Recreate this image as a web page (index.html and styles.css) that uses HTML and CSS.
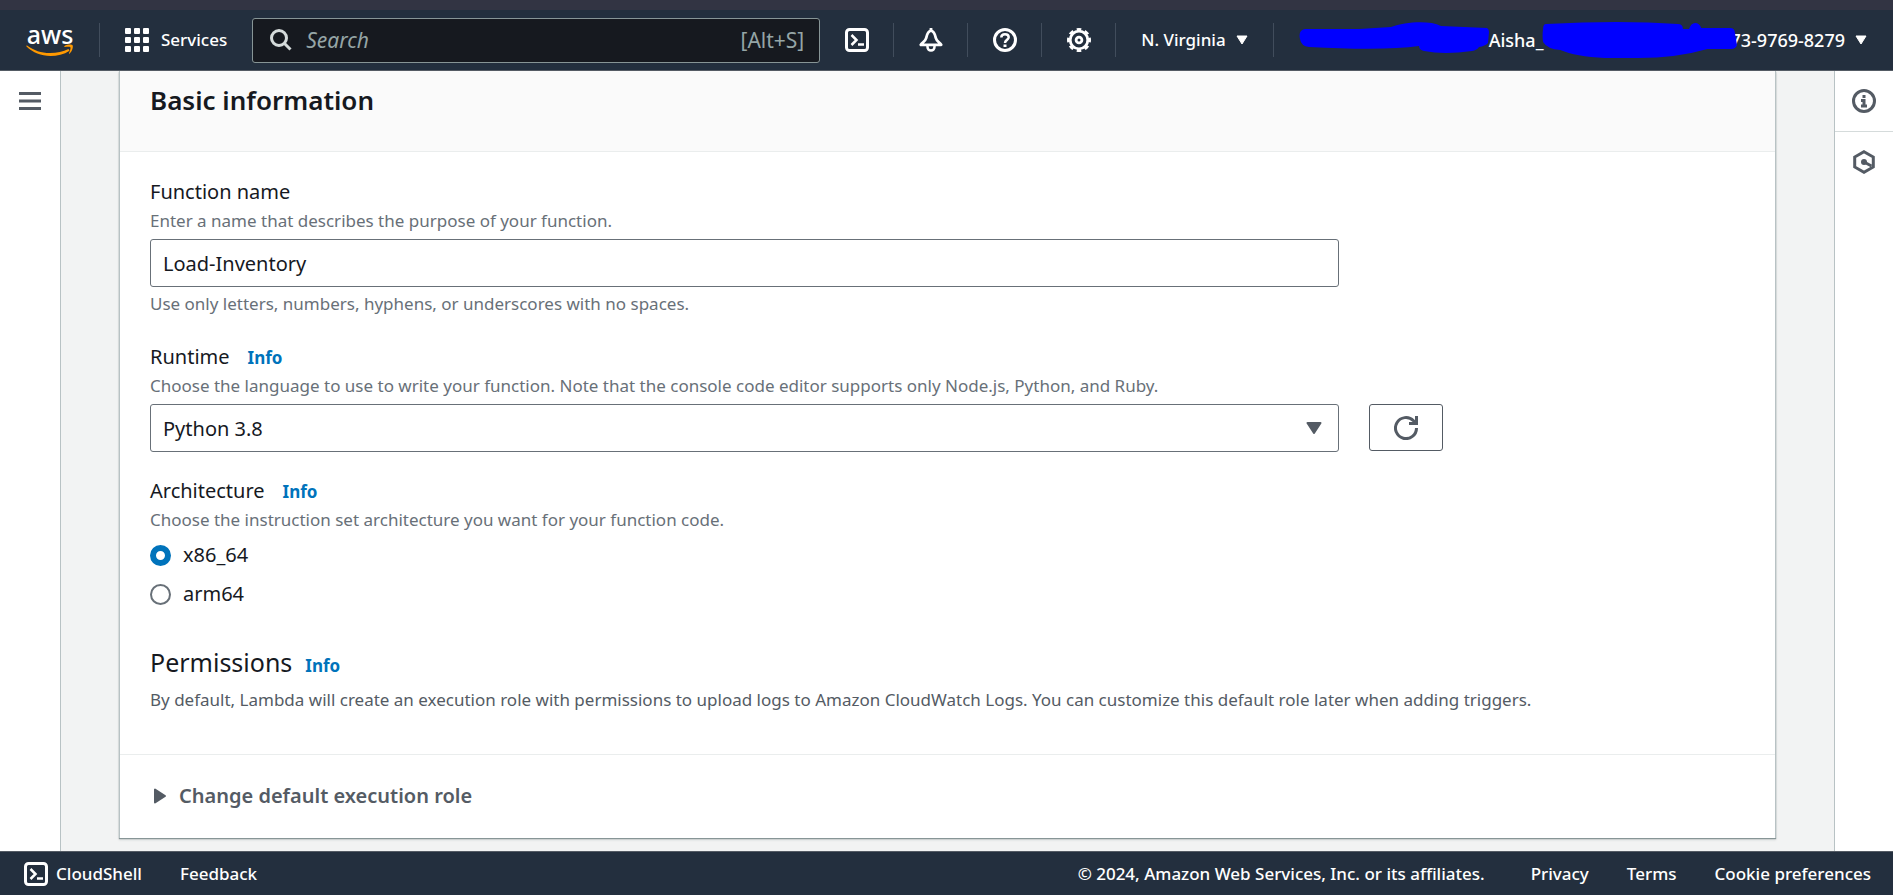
FILE: index.html
```html
<!DOCTYPE html>
<html lang="en">
<head>
<meta charset="utf-8">
<title>Create function - Lambda</title>
<link rel="stylesheet" href="styles.css">
</head>
<body>
<div class="strip"></div>
<header class="nav">
  <a class="logo" href="#" aria-label="AWS home">
    <span class="logo-word">aws</span>
    <svg class="smile" width="48" height="13" viewBox="0 0 48 13"><path d="M1 1.5C8 6.500 15 9 24 9c7 0 13-1.500 18.500-4l1 1.800C38 10.500 31 12 24.500 12 15 12 7 8.500.5 2.500.2 1.800.5 1.200 1 1.500z" fill="#f90"/><path d="M38.500 2c2.500-1.600 7-1.800 8-.8 1 1.200-.2 6-2.800 8.300-.6.500-1 .2-.7-.4.700-1.700 2-5 1.400-5.900-.7-.8-3.800-.5-5.500-.3-.7.100-.9-.5-.4-.9z" fill="#f90"/></svg>
  </a>
  <span class="rule"></span>
  <button class="services">
    <svg width="24" height="24" viewBox="0 0 24 24" fill="#fff"><rect width="6" height="6" rx="1"/><rect x="9" width="6" height="6" rx="1"/><rect x="18" width="6" height="6" rx="1"/><rect y="9" width="6" height="6" rx="1"/><rect x="9" y="9" width="6" height="6" rx="1"/><rect x="18" y="9" width="6" height="6" rx="1"/><rect y="18" width="6" height="6" rx="1"/><rect x="9" y="18" width="6" height="6" rx="1"/><rect x="18" y="18" width="6" height="6" rx="1"/></svg>
    Services
  </button>
  <label class="search">
    <svg width="22" height="22" viewBox="0 0 22 22" fill="none" stroke="#d5dbdb" stroke-width="3"><circle cx="9" cy="9" r="7.500"/><path d="M14.500 14.500 20.500 20.500"/></svg>
    <input type="text" placeholder="Search" aria-label="Search">
    <span class="hint">[Alt+S]</span>
  </label>
  <button class="tool" aria-label="CloudShell"><svg width="24" height="24" viewBox="0 0 24 24" fill="none" stroke="#fff" stroke-width="3"><rect x="1.500" y="1.500" width="21" height="21" rx="3"/><path d="M6.500 7l5 5-5 5" stroke-width="2.500"/><path d="M13 16.500h6" stroke-width="2.500"/></svg></button>
  <span class="rule"></span>
  <button class="tool" aria-label="Notifications"><svg width="24" height="24" viewBox="0 0 24 24" fill="none" stroke="#fff" stroke-width="2.800" stroke-linejoin="round"><path d="M12 2.500C8.500 3.500 8 6.500 7.200 10 6.500 13 3.500 14.500 1.800 16.800h20.400C20.500 14.500 17.500 13 16.800 10 16 6.500 15.500 3.500 12 2.500z"/><path d="M12 0v3"/><path d="M8.500 18v1c0 2 1.500 3.500 3.500 3.500s3.500-1.500 3.500-3.500v-1" stroke-width="2.500"/></svg></button>
  <span class="rule"></span>
  <button class="tool" aria-label="Help"><svg width="24" height="24" viewBox="0 0 24 24" fill="none" stroke="#fff" stroke-width="3"><circle cx="12" cy="12" r="10.500"/><path d="M8.300 9.500C8.300 7.300 9.800 6.200 12 6.200s3.700 1.200 3.700 3.100c0 2.700-3.700 2.500-3.700 5.700" stroke-width="2.500"/><path d="M12 16.500v2.500"/></svg></button>
  <span class="rule"></span>
  <button class="tool" aria-label="Settings"><svg width="24" height="24" viewBox="0 0 24 24" fill="none" stroke="#fff" stroke-width="2.800"><circle cx="12" cy="12" r="8.800"/><circle cx="12" cy="12" r="10.600" pathLength="16" stroke-dasharray="1.100 .9" stroke-dashoffset=".55"/><circle cx="12" cy="12" r="2.900"/></svg></button>
  <span class="rule"></span>
  <button class="menu">N. Virginia <svg width="12" height="10" viewBox="0 0 12 10"><path d="M1 1h10L6 9z" fill="#fff" stroke="#fff" stroke-linejoin="round"/></svg></button>
  <span class="rule"></span>
  <button class="menu account" aria-label="Account">
    <svg class="blot" width="190" height="36" viewBox="0 0 190 36"><path d="M6 7 60 7 92 5C106 0 130-2 142 4l46 2q2 1 2 4l-1 11q-3 3-9 4-2 3-7 4-28 4-48 0-5-1-5-5-35 5-110 1-8-1-9-8Q-1 8 6 7z" fill="#00f"/></svg>
    <span>Aisha_</span>
    <svg class="blot over" width="199" height="36" viewBox="0 0 195 36" preserveAspectRatio="none"><path d="M7 2Q80-2 136 2q5 0 5 5l6 0q2-6 6-6t6 5l28 0q5 0 5 5l2 12q-1 4-6 4l-23 0q-30 9-68 9-54 2-76-8-13-1-17-8-1-7 0-13Q4 2 7 2z" fill="#00f"/></svg>
    <span class="digits">73-9769-8279</span>
    <svg width="12" height="10" viewBox="0 0 12 10"><path d="M1 1h10L6 9z" fill="#fff" stroke="#fff" stroke-linejoin="round"/></svg>
  </button>
</header>

<div class="body">
  <aside class="side left"><button aria-label="Open navigation"><svg width="22" height="18" viewBox="0 0 22 18" fill="#545b64"><path d="M0 0h22v3H0zM0 7.500h22v3H0zM0 15h22v3H0z"/></svg></button></aside>
  <main class="main">
    <section class="card">
      <div class="card-head"><h2>Basic information</h2></div>
      <form class="card-body">
        <div class="field">
          <div class="label-row"><label for="fn">Function name</label></div>
          <p class="desc">Enter a name that describes the purpose of your function.</p>
          <div class="grid"><input class="control" id="fn" type="text" value="Load-Inventory"></div>
          <p class="desc note">Use only letters, numbers, hyphens, or underscores with no spaces.</p>
        </div>
        <div class="field">
          <div class="label-row"><label for="rt">Runtime</label><a href="#">Info</a></div>
          <p class="desc">Choose the language to use to write your function. Note that the console code editor supports only Node.js, Python, and Ruby.</p>
          <div class="grid">
            <div class="select control-col"><select class="control" id="rt"><option>Python 3.8</option></select><svg width="16" height="12" viewBox="0 0 16 12"><path d="M1.500 1h13L8 11z" fill="#545b64" stroke="#545b64" stroke-width="2" stroke-linejoin="round"/></svg></div>
            <button class="refresh" type="button" aria-label="Refresh runtimes"><svg width="24" height="24" viewBox="0 0 24 24" fill="none" stroke="#545b64" stroke-width="3"><path d="M22.500 12A10.500 10.500 0 1 1 19.500 4.700L22 7.500"/><path d="M22.500 0v7.500H15"/></svg></button>
          </div>
        </div>
        <fieldset class="field arch">
          <legend class="label-row"><span>Architecture</span><a href="#">Info</a></legend>
          <p class="desc">Choose the instruction set architecture you want for your function code.</p>
          <div class="radios">
            <label><input type="radio" name="arch" checked>x86_64</label>
            <label><input type="radio" name="arch">arm64</label>
          </div>
        </fieldset>
        <div class="perm-head"><h3>Permissions</h3><a href="#">Info</a></div>
        <p class="desc dark">By default, Lambda will create an execution role with permissions to upload logs to Amazon CloudWatch Logs. You can customize this default role later when adding triggers.</p>
      </form>
      <div class="card-foot"><button class="expand"><svg width="14" height="16" viewBox="0 0 14 16"><path d="M2 1.500v13L12 8z" fill="#545b64" stroke="#545b64" stroke-width="2" stroke-linejoin="round"/></svg>Change default execution role</button></div>
    </section>
  </main>
  <aside class="side right">
    <button aria-label="Info panel"><svg width="24" height="24" viewBox="0 0 24 24" fill="none" stroke="#545b64" stroke-width="3"><circle cx="12" cy="12" r="10.500"/><path d="M12 6v3M9 11.500h3V17M9 17h6" /></svg></button>
    <button aria-label="Tutorials"><svg width="24" height="24" viewBox="0 0 24 24" fill="none" stroke="#545b64" stroke-width="3"><path d="M12 1.700 21.300 7v10L12 22.300 2.700 17V7z"/><circle cx="12" cy="12" r="3" fill="#545b64" stroke="none"/><path d="M12 12l7.500 4"/></svg></button>
  </aside>
</div>

<footer class="foot">
  <button class="shell"><svg width="24" height="24" viewBox="0 0 24 24" fill="none" stroke="#fff" stroke-width="3"><rect x="1.500" y="1.500" width="21" height="21" rx="3"/><path d="M6.500 7l5 5-5 5" stroke-width="2.500"/><path d="M13 16.500h6" stroke-width="2.500"/></svg>CloudShell</button>
  <a href="#">Feedback</a>
  <span class="copy">© 2024, Amazon Web Services, Inc. or its affiliates.</span>
  <a href="#">Privacy</a>
  <a href="#">Terms</a>
  <a href="#">Cookie preferences</a>
</footer>
</body>
</html>
```

FILE: styles.css
```css
* { box-sizing: border-box; }
body {
  margin: 0;
  min-height: 100vh;
  display: flex;
  flex-direction: column;
  font-family: "Noto Sans", "Open Sans", sans-serif;
  font-size: 20px;
  line-height: 30px;
  color: #16191f;
  background: #f2f3f3;
}
button { font: inherit; color: inherit; background: none; border: 0; padding: 0; display: flex; align-items: center; cursor: pointer; }
svg { display: block; flex: none; }
a { text-decoration: none; color: inherit; }
p, h2, h3 { margin: 0; }

.strip { height: 10px; background: #323443; }

.nav {
  display: flex;
  align-items: center;
  height: 61px;
  padding: 0 26px;
  background: #232f3e;
  border-bottom: 1px solid #545b64;
  color: #fff;
  font-size: 17px;
  font-weight: 500;
}
.nav > * { flex: none; }
.logo { width: 48px; display: flex; flex-direction: column; align-items: center; }
.logo-word { font-size: 25px; line-height: 20px; font-weight: 500; }
.rule { width: 1px; height: 34px; background: #414d5c; margin: 0 25px; }
.tool + .rule { margin-left: 24px; }
.services { gap: 12px; margin-right: 25px; }
.nav .search {
  flex: 1;
  min-width: 0;
  display: flex;
  align-items: center;
  gap: 14px;
  height: 45px;
  padding: 0 15px 0 17px;
  margin-right: 25px;
  background: #16191f;
  border: 1px solid #879596;
  border-radius: 3px;
}
.search input { flex: 1; min-width: 0; border: 0; outline: 0; padding: 0; background: none; color: #fff; font: italic 400 21px "Noto Sans", sans-serif; }
.search input::placeholder { color: #95a5a6; opacity: 1; }
.hint { color: #95a5a6; font-size: 21px; font-weight: 400; }
.menu { gap: 10px; }
.account { gap: 0; font-size: 18px; }
.digits { margin-left: -8px; margin-right: 10px; }
.over { position: relative; margin-left: -4px; }

.body { flex: 1; display: flex; }
.side { background: #fff; display: flex; flex-direction: column; flex: none; }
.side button { width: 60px; height: 60px; justify-content: center; }
.left { border-right: 1px solid #b8c2c4; }
.right { border-left: 1px solid #b8c2c4; }
.right button { width: 58px; }
.right button:first-child { height: 61px; border-bottom: 1px solid #d5dbdb; }
.main { flex: 1; min-width: 0; padding: 0 58px 12px; }

.card { background: #fff; border: solid #b8c2c4; border-width: 0 1px; box-shadow: 0 1px 1px #879596, 0 2px 2px #d0d5d5; }
.card-head { height: 81px; padding: 11px 30px; background: #fafafa; border-bottom: 1px solid #eaeded; }
h2 { font-size: 26px; line-height: 36px; font-weight: 600; }
.card-body { padding: 25px 30px 40px; }
.field { border: 0; margin: 0 0 24px; padding: 0; min-width: 0; }
.label-row { display: flex; align-items: baseline; gap: 18px; padding: 0; }
.card-body a { color: #0073bb; font-size: 17px; line-height: 24px; font-weight: 700; }
.desc { font-size: 17px; line-height: 28px; color: #687078; }
.desc.dark { color: #545b64; }
.note { margin-top: 3px; }
.grid { display: grid; grid-template-columns: repeat(12, minmax(0, 1fr)); column-gap: 30px; margin-top: 4px; }
.control { width: 100%; height: 48px; padding: 0 12px; border: 1px solid #687078; border-radius: 3px; background: #fff; color: #16191f; font: 20px "Noto Sans", sans-serif; appearance: none; grid-column: span 9; }
.control-col { grid-column: span 9; }
.select { display: grid; align-items: center; }
.select > * { grid-area: 1 / 1; }
.select svg { justify-self: end; margin-right: 17px; pointer-events: none; }
.refresh { width: 74px; height: 47px; justify-content: center; border: 1px solid #545b64; border-radius: 3px; }
.radios { display: flex; flex-direction: column; gap: 9px; padding-top: 6px; }
.radios label { display: flex; align-items: center; gap: 12px; }
.radios input { appearance: none; width: 21px; height: 21px; margin: 0; border: 2px solid #687078; border-radius: 50%; }
.radios input:checked { border: 6px solid #0073bb; }
.arch { margin-bottom: 35px; }
.perm-head { display: flex; align-items: baseline; gap: 13px; margin-bottom: 6px; }
h3 { font-size: 25px; line-height: 36px; font-weight: 400; }
.card-foot { border-top: 1px solid #eaeded; padding: 26px 33px 27px; }
.expand { gap: 12px; color: #545b64; font-weight: 600; }

.foot {
  height: 44px;
  display: flex;
  align-items: center;
  gap: 38px;
  padding: 0 22px 0 24px;
  background: #232f3e;
  border-top: 1px solid #545b64;
  color: #fff;
  font-size: 17px;
  font-weight: 500;
}
.shell { gap: 8px; }
.copy { margin-left: auto; margin-right: 8px; }
```
